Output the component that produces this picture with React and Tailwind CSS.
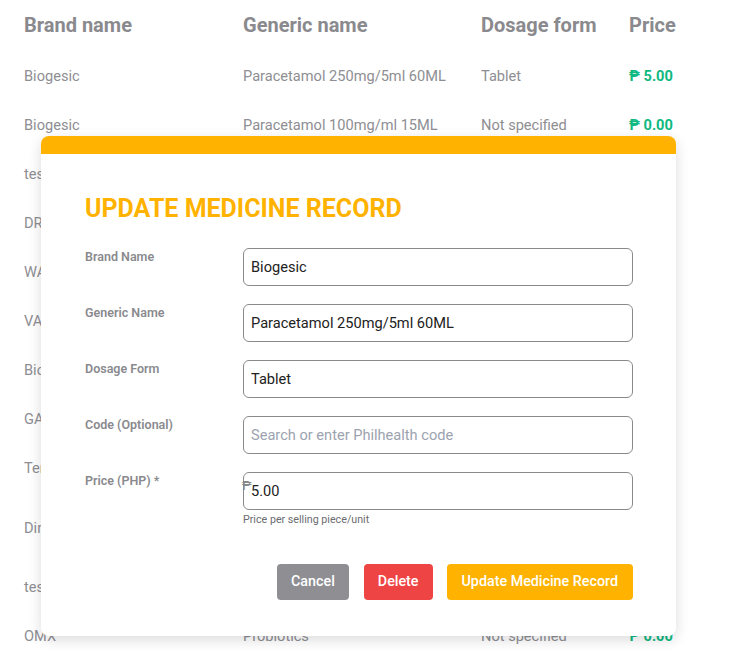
import { useState } from 'react';

const rows = [
    { brand: 'Biogesic', generic: 'Paracetamol 250mg/5ml 60ML', form: 'Tablet', price: '5.00', h: 'h-[49px]' },
    { brand: 'Biogesic', generic: 'Paracetamol 100mg/ml 15ML', form: 'Not specified', price: '0.00', h: 'h-[49px]' },
    { brand: 'test', generic: 'test', form: 'Not specified', price: '0.00', h: 'h-[49px]' },
    { brand: 'DRAMAMINE', generic: 'Dimenhydrinate 50mg', form: 'Tablet', price: '8.00', h: 'h-[49px]' },
    { brand: 'WARFARIN', generic: 'Warfarin 5mg', form: 'Tablet', price: '2.00', h: 'h-[49px]' },
    { brand: 'VALSARTAN', generic: 'Valsartan 80mg', form: 'Tablet', price: '5.00', h: 'h-[49px]' },
    { brand: 'Biogesic', generic: 'Paracetamol 500mg', form: 'Tablet', price: '4.50', h: 'h-[49px]' },
    { brand: 'GAVISCON', generic: 'Sodium Alginate', form: 'Suspension', price: '9.00', h: 'h-[49px]' },
    { brand: 'Tempra', generic: 'Paracetamol 120mg/5ml', form: 'Syrup', price: '9.50', h: 'h-[50px]' },
    { brand: 'Dimetapp', generic: 'Brompheniramine + Phenylephrine', form: 'Syrup', price: '7.00', h: 'h-[70px]' },
    { brand: 'test2', generic: 'test', form: 'Not specified', price: '0.00', h: 'h-[48px]' },
    { brand: 'OMX', generic: 'Probiotics', form: 'Not specified', price: '0.00', h: 'h-[50px]' },
];

const Field = ({ label, children }) => (
    <>
        <label className="pt-[1px] text-[12.5px] font-semibold leading-4 text-[#8a8a8e]">{label}</label>
        <div>{children}</div>
    </>
);

const inputCls = 'w-full h-[38px] rounded-md border border-[#8a8a8e] bg-white px-[7px] text-[14.6px] text-[#222] placeholder:text-[#9ca3af] outline-none';

const App = () => {
    const [form, setForm] = useState({
        brand: 'Biogesic',
        generic: 'Paracetamol 250mg/5ml 60ML',
        dosage: 'Tablet',
        code: '',
        price: '5.00',
    });

    const set = (k) => (e) => setForm({ ...form, [k]: e.target.value });

    return (
        <div className="relative h-[669px] w-[755px] overflow-hidden bg-white font-['Roboto',sans-serif]">
            {/* background table */}
            <table className="ml-6 text-left">
                <thead>
                    <tr className="h-[52px] text-[20px] font-bold text-[#8a8a8e]">
                        <th className="w-[219px] pb-[2px] font-bold">Brand name</th>
                        <th className="w-[238px] pb-[2px] font-bold">Generic name</th>
                        <th className="w-[148px] pb-[2px] font-bold">Dosage form</th>
                        <th className="w-[100px] pb-[2px] font-bold">Price</th>
                    </tr>
                </thead>
                <tbody className="text-[14.6px] text-[#8e8e93]">
                    {rows.map((r, i) => (
                        <tr key={i} className={r.h}>
                            <td>{r.brand}</td>
                            <td>{r.generic}</td>
                            <td>{r.form}</td>
                            <td className="font-bold text-[#10b981]">₱ {r.price}</td>
                        </tr>
                    ))}
                </tbody>
            </table>

            {/* modal */}
            <div className="absolute left-[41px] top-[136px] w-[635px] overflow-hidden rounded-lg bg-white shadow-[0_4px_14px_rgba(0,0,0,0.14)]">
                <div className="h-[18px] bg-[#ffb300]" />
                <div className="pb-[36px] pl-[44px] pr-[43px] pt-[41px]">
                    <h2 className="mb-[25px] text-[25px] font-bold leading-7 text-[#ffb300]">UPDATE MEDICINE RECORD</h2>
                    <div className="grid grid-cols-[158px_1fr] gap-y-[18px]">
                        <Field label="Brand Name">
                            <input className={inputCls} value={form.brand} onChange={set('brand')} />
                        </Field>
                        <Field label="Generic Name">
                            <input className={inputCls} value={form.generic} onChange={set('generic')} />
                        </Field>
                        <Field label="Dosage Form">
                            <input className={inputCls} value={form.dosage} onChange={set('dosage')} />
                        </Field>
                        <Field label="Code (Optional)">
                            <input className={inputCls} value={form.code} onChange={set('code')} placeholder="Search or enter Philhealth code" />
                        </Field>
                        <Field label="Price (PHP) *">
                            <div className="relative">
                                <span className="absolute left-[-1px] top-[6px] text-[13px] leading-4 text-[#888]">₱</span>
                                <input className={inputCls} value={form.price} onChange={set('price')} />
                            </div>
                            <p className="mt-[2px] text-[10.7px] leading-4 text-[#6b6b70]">Price per selling piece/unit</p>
                        </Field>
                    </div>
                    <div className="mt-[36px] flex justify-end gap-[14px]">
                        <button className="mr-[1px] h-9 rounded bg-[#8e8e93] px-[14px] text-[14.3px] font-medium text-white">Cancel</button>
                        <button className="h-9 rounded bg-[#ef4444] px-[14px] text-[14.3px] font-medium text-white">Delete</button>
                        <button className="h-9 rounded bg-[#ffb300] px-[15px] text-[14.3px] font-medium text-white">Update Medicine Record</button>
                    </div>
                </div>
            </div>
        </div>
    );
};

export default App;
